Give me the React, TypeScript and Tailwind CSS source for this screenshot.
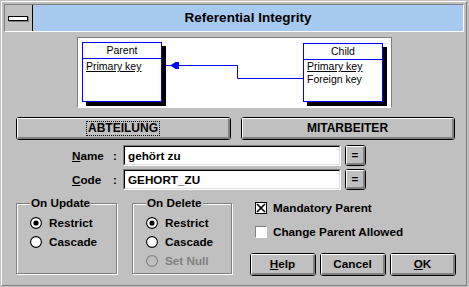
import React from "react";

const F = "font-['Liberation_Sans',Arial,sans-serif]";

function WinButton({
  children,
  className,
}: {
  children: React.ReactNode;
  className: string;
}) {
  return (
    <div className={`border border-black rounded-[3px] bg-[#c0c0c0] ${className}`}>
      <div className="h-full w-full border-t border-l border-b-2 border-r-2 border-t-white border-l-white border-b-[#808080] border-r-[#808080] flex items-center justify-center font-bold text-[11.7px] text-black">
        {children}
      </div>
    </div>
  );
}

function Radio({ checked, disabled }: { checked?: boolean; disabled?: boolean }) {
  return (
    <svg width="12" height="12" viewBox="0 0 12 12" className="shrink-0">
      <circle
        cx="6"
        cy="6"
        r="5.4"
        fill={disabled ? "#c0c0c0" : "#ffffff"}
        stroke={disabled ? "#808080" : "#000000"}
        strokeWidth="1.1"
      />
      {checked && <circle cx="6" cy="6" r="2.6" fill="#000000" />}
    </svg>
  );
}

function Group({
  title,
  width,
  items,
}: {
  title: string;
  width: string;
  items: { label: string; checked?: boolean; disabled?: boolean }[];
}) {
  return (
    <div
      className={`relative h-[71px] border border-[#808080] shadow-[1px_1px_0_#ffffff,inset_1px_1px_0_#ffffff] pt-[9px] pl-[13px] ${width}`}
    >
      <div className="absolute left-[13px] top-[-9px] px-[1px] bg-[#c0c0c0] leading-[16px] font-bold text-[11.7px] text-black">
        {title}
      </div>
      {items.map((it) => (
        <div key={it.label} className="h-[19px] flex items-center gap-[7px]">
          <Radio checked={it.checked} disabled={it.disabled} />
          <span
            className={`font-bold text-[11.7px] ${it.disabled ? "text-[#808080]" : "text-black"}`}
          >
            {it.label}
          </span>
        </div>
      ))}
    </div>
  );
}

function Edit({ value }: { value: string }) {
  return (
    <div className="w-[218px] h-[21px] border-t border-l border-b border-r border-t-[#808080] border-l-[#808080] border-b-white border-r-white">
      <div className="h-full w-full border-t border-l border-b border-r border-t-black border-l-black border-b-[#dfdfdf] border-r-[#dfdfdf] bg-white flex items-center pl-[3px] font-bold text-[11.7px] text-black">
        {value}
      </div>
    </div>
  );
}

export default function App() {
  return (
    <div className={`w-[469px] h-[287px] bg-[#c0c0c0] overflow-hidden pl-[1px] pt-[1px] ${F}`}>
      <div className="w-[466px] h-[285px] border-t border-l border-b border-r border-t-white border-l-white border-b-[#808080] border-r-[#808080]">
        {/* Title bar */}
        <div className="ml-[2px] mt-[2px] w-[460px] h-[28px] border-t border-l border-b border-r border-t-[#808080] border-l-[#808080] border-b-white border-r-white flex">
          <div className="w-[28px] h-full border-r border-black bg-[#c0c0c0] flex items-center justify-center">
            <div className="w-[20px] h-[5px] bg-white border border-black shadow-[1px_1px_0_#808080] ml-[-1px]" />
          </div>
          <div className="flex-1 bg-[#a6caf0] flex items-center justify-center font-bold text-[13.5px] text-black">
            Referential Integrity
          </div>
        </div>

        {/* Diagram panel */}
        <div className="ml-[75px] mt-[5px] w-[315px] h-[71px] border-t border-l border-b border-r border-t-[#808080] border-l-[#808080] border-b-white border-r-[#808080] bg-white relative">
          <svg className="absolute left-0 top-0" width="313" height="69" viewBox="0 0 313 69">
            <polyline
              points="87,27.5 159.5,27.5 159.5,40.5 225,40.5"
              fill="none"
              stroke="#0000ff"
              strokeWidth="1"
            />
            <path d="M92 27.5 L97 24.5 L97 24 L101 24 L101 31 L97 31 L97 30.5 Z" fill="#0000ff" />
          </svg>
          {/* Parent */}
          <div className="absolute left-[4px] top-[4px] w-[80px] h-[60px] border border-[#0000ff] bg-white shadow-[4px_4px_0_#000000] text-[10.5px] text-black leading-[13px]">
            <div className="h-[16px] border-b border-[#0000ff] flex items-center justify-center">
              Parent
            </div>
            <div className="pl-[3px] pt-[1px]">
              <span className="underline">Primary key</span>
            </div>
          </div>
          {/* Child */}
          <div className="absolute left-[225px] top-[5px] w-[80px] h-[59px] border border-[#0000ff] bg-white shadow-[4px_4px_0_#000000] text-[10.5px] text-black leading-[13px]">
            <div className="h-[16px] border-b border-[#0000ff] flex items-center justify-center">
              Child
            </div>
            <div className="pl-[3px]">
              <div>
                <span className="underline">Primary key</span>
              </div>
              <div>Foreign key</div>
            </div>
          </div>
        </div>

        {/* Entity buttons */}
        <div className="ml-[14px] mt-[9px] flex gap-[10px]">
          <WinButton className="w-[215px] h-[23px]">
            <span className="outline outline-1 outline-dotted outline-black px-[1px] leading-[13px] text-[12px]">
              ABTEILUNG
            </span>
          </WinButton>
          <WinButton className="w-[214px] h-[23px]">
            <span className="text-[12px]">MITARBEITER</span>
          </WinButton>
        </div>

        {/* Name */}
        <div className="ml-[70px] mt-[5px] flex items-center h-[21px]">
          <div className="w-[41px] font-bold text-[11.7px] text-black">
            <u>N</u>ame
          </div>
          <div className="w-[10px] font-bold text-[11.7px] text-black">:</div>
          <Edit value="gehört zu" />
          <WinButton className="ml-[4px] w-[21px] h-[21px]">=</WinButton>
        </div>
        {/* Code */}
        <div className="ml-[70px] mt-[3px] flex items-center h-[21px]">
          <div className="w-[41px] font-bold text-[11.7px] text-black">
            <u>C</u>ode
          </div>
          <div className="w-[10px] font-bold text-[11.7px] text-black">:</div>
          <Edit value="GEHORT_ZU" />
          <WinButton className="ml-[4px] w-[21px] h-[21px]">=</WinButton>
        </div>

        {/* Bottom section */}
        <div className="ml-[14px] mt-[13px] flex">
          <Group
            title="On Update"
            width="w-[101px]"
            items={[{ label: "Restrict", checked: true }, { label: "Cascade" }]}
          />
          <div className="w-[15px]" />
          <Group
            title="On Delete"
            width="w-[100px]"
            items={[
              { label: "Restrict", checked: true },
              { label: "Cascade" },
              { label: "Set Null", disabled: true },
            ]}
          />
          <div className="ml-[18px] -mt-[1px] flex flex-col">
            <div className="ml-[5px] h-[12px] flex items-center gap-[6px]">
              <div className="w-[12px] h-[12px] border border-black bg-white relative">
                <svg width="10" height="10" viewBox="0 0 10 10" className="absolute left-0 top-0">
                  <path d="M1 1 L9 9 M9 1 L1 9" stroke="#000" strokeWidth="1.6" />
                </svg>
              </div>
              <span className="font-bold text-[11.7px] text-black">Mandatory Parent</span>
            </div>
            <div className="ml-[5px] mt-[12px] h-[12px] flex items-center gap-[6px]">
              <div className="w-[12px] h-[12px] border-t border-l border-b border-r border-t-[#808080] border-l-[#808080] border-b-white border-r-white bg-white" />
              <span className="font-bold text-[11.7px] text-black">Change Parent Allowed</span>
            </div>
            <div className="mt-[15px] flex gap-[4px]">
              <WinButton className="w-[66px] h-[23px]">
                <span>
                  <u>H</u>elp
                </span>
              </WinButton>
              <WinButton className="w-[66px] h-[23px]">Cancel</WinButton>
              <WinButton className="w-[66px] h-[23px]">
                <span>
                  <u>O</u>K
                </span>
              </WinButton>
            </div>
          </div>
        </div>
      </div>
    </div>
  );
}
